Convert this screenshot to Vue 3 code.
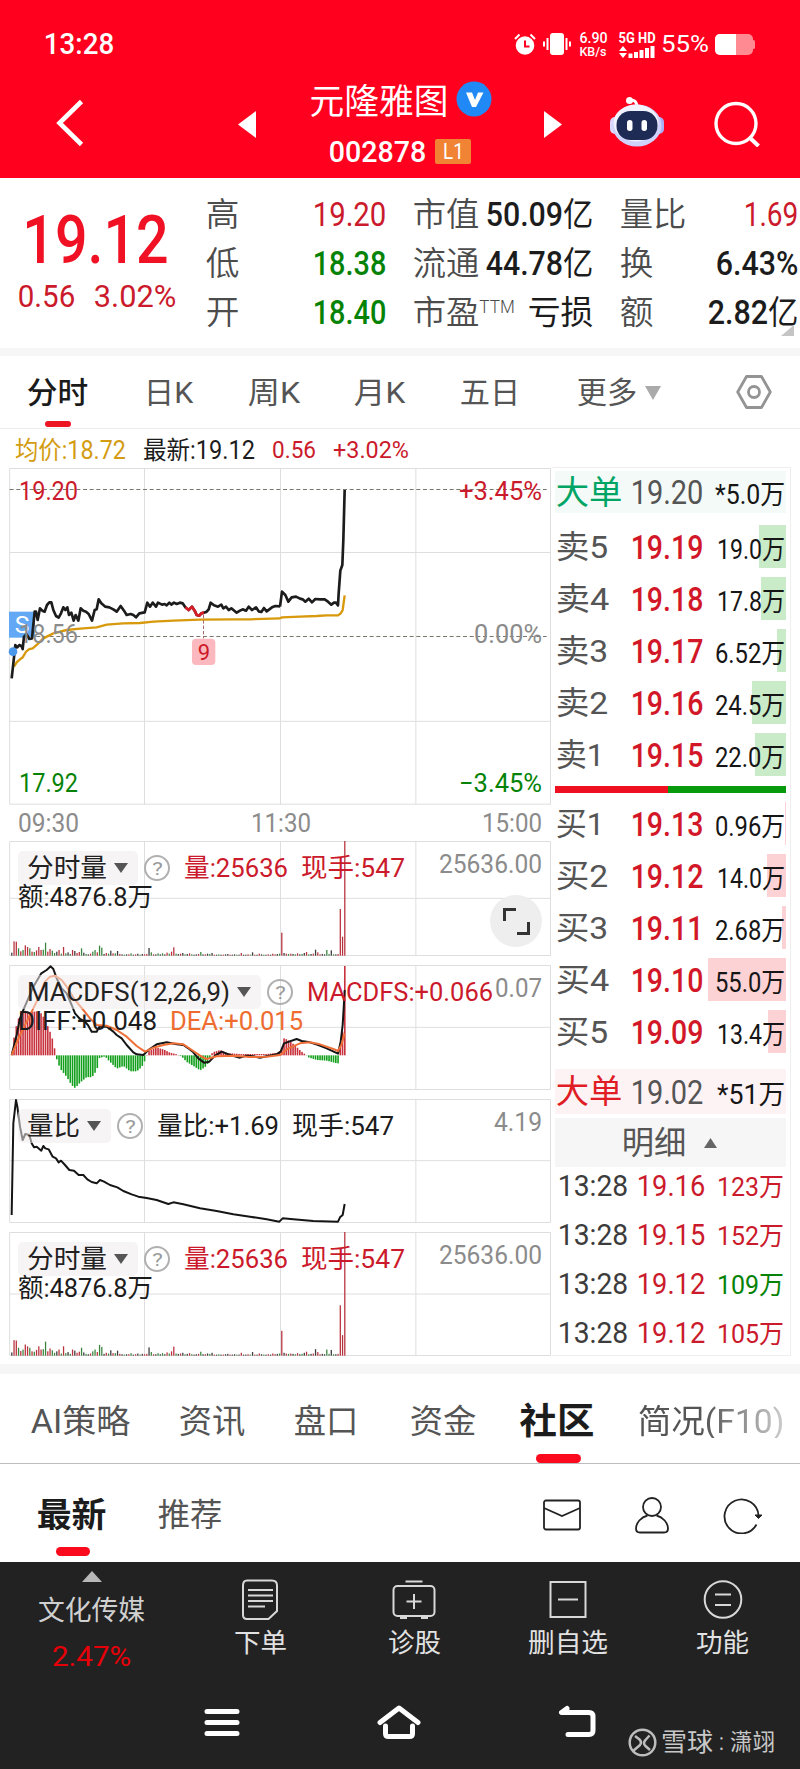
<script setup>
import { h } from 'vue'

// One line of text squeezed to a given width, vertically centred in its box.
// `cjk` sets a separate weight for the Chinese characters of a mixed line.
const Fit = (props) =>
  h(
    'svg',
    { class: 'fit', width: props.w, height: props.size, style: { overflow: 'visible', flex: 'none', display: 'block' } },
    [
      h(
        'text',
        {
          x: -props.size * 0.04,
          y: props.size * 0.84,
          'font-size': props.size,
          fill: 'currentColor',
          textLength: props.w + props.size * 0.08,
          lengthAdjust: 'spacingAndGlyphs'
        },
        props.cjk
          ? props.t
              .split(/([\u4e00-\u9fff]+)/)
              .filter(Boolean)
              .map((run) => h('tspan', /[\u4e00-\u9fff]/.test(run) ? { 'font-weight': props.cjk } : {}, run))
          : props.t
      )
    ]
  )
Fit.props = { t: String, w: Number, size: Number, cjk: Number }

const stats = [
  [
    { label: '高', lw: 31, value: '19.20', w: 71, tone: 'red' },
    { label: '市值', lw: 64, value: '50.09亿', w: 105, tone: 'ink' },
    { label: '量比', lw: 64, value: '1.69', w: 52, tone: 'red' }
  ],
  [
    { label: '低', lw: 31, value: '18.38', w: 71, tone: 'green' },
    { label: '流通', lw: 64, value: '44.78亿', w: 105, tone: 'ink' },
    { label: '换', lw: 31, value: '6.43%', w: 80, tone: 'ink' }
  ],
  [
    { label: '开', lw: 31, value: '18.40', w: 71, tone: 'green' },
    { label: '市盈', lw: 64, sup: 'TTM', value: '亏损', w: 63, tone: 'ink' },
    { label: '额', lw: 31, value: '2.82亿', w: 88, tone: 'ink' }
  ]
]

const periods = [
  { t: '分时', w: 59, active: true },
  { t: '日K', w: 47 },
  { t: '周K', w: 50 },
  { t: '月K', w: 49 },
  { t: '五日', w: 58 },
  { t: '更多', w: 58, more: true }
]

const sells = [
  { label: '卖5', lw: 50, price: '19.19', vol: '19.0万', w: 66, bar: 27 },
  { label: '卖4', lw: 51, price: '19.18', vol: '17.8万', w: 66, bar: 25 },
  { label: '卖3', lw: 50, price: '19.17', vol: '6.52万', w: 68, bar: 9 },
  { label: '卖2', lw: 50, price: '19.16', vol: '24.5万', w: 68, bar: 34 },
  { label: '卖1', lw: 46, price: '19.15', vol: '22.0万', w: 68, bar: 31 }
]

const buys = [
  { label: '买1', lw: 46, price: '19.13', vol: '0.96万', w: 68, bar: 1 },
  { label: '买2', lw: 50, price: '19.12', vol: '14.0万', w: 66, bar: 19 },
  { label: '买3', lw: 50, price: '19.11', vol: '2.68万', w: 68, bar: 4 },
  { label: '买4', lw: 51, price: '19.10', vol: '55.0万', w: 68, bar: 78 },
  { label: '买5', lw: 50, price: '19.09', vol: '13.4万', w: 66, bar: 18 }
]

const trades = [
  { price: '19.16', vol: '123万', tone: 'red' },
  { price: '19.15', vol: '152万', tone: 'red' },
  { price: '19.12', vol: '109万', tone: 'green' },
  { price: '19.12', vol: '105万', tone: 'red' }
]

const sections = [
  { t: 'AI策略', w: 97, size: 33 },
  { t: '资讯', w: 64, size: 33 },
  { t: '盘口', w: 62, size: 33 },
  { t: '资金', w: 64, size: 33 },
  { t: '社区', w: 72, size: 36, active: true },
  { t: '简况(F10)', w: 144, size: 33, fade: true }
]

// Minute bars: 149 slots from the open, 6.75 units apart
const STEP = 6.75
const volumeHeights = [
  9, 43, 42, 22, 13, 17, 31, 26, 22, 12, 11, 16, 26, 17, 18, 39, 12, 20, 15, 8, 12, 17, 6, 26, 7, 10, 5, 17, 14, 8,
  11, 22, 9, 5, 4, 6, 12, 17, 10, 30, 24, 5, 8, 6, 15, 7, 7, 14, 5, 4, 3, 4, 4, 7, 3, 4, 6, 3, 5, 4,
  5, 23, 10, 4, 4, 7, 4, 7, 4, 9, 6, 12, 25, 6, 5, 6, 8, 4, 5, 7, 4, 3, 4, 5, 11, 4, 4, 6, 5, 8,
  3, 3, 4, 3, 3, 4, 5, 3, 3, 4, 3, 3, 8, 3, 3, 4, 3, 10, 3, 3, 6, 4, 3, 3, 4, 3, 6, 4, 5, 6,
  69, 8, 6, 5, 6, 5, 4, 7, 4, 5, 8, 11, 4, 5, 6, 18, 10, 4, 5, 4, 17, 5, 16, 4, 4, 5, 140, 57, 345
]
const volumeTones =
  'krrgrgrrgrgrrrggrrggkrgrgkgrkrrgkgkrggrggkrgkrgkrkgkrgkrkgkrrkgrkgkgkrgrrgkrkgkrgkkrgkrkgkrkgkrkkrkkgkrkkrgkrkrkgkrkrrkgkkrgrkgrkgkrgkrkrrkkggkgkrrr'
const toneColors = { r: '#b8303c', g: '#38843c', k: '#3a3a3a' }
const volumeBars = volumeHeights.map((height, i) => ({
  x: 33.5 + i * STEP,
  height,
  fill: toneColors[i > 145 || height > 50 ? 'r' : volumeTones[i] || 'k']
}))

const histogramAnchors = [
  [35, 8], [42, 55], [50, 95], [60, 125], [70, 135], [90, 130], [110, 132], [125, 125], [140, 95], [150, 70],
  [160, 40], [166, 5], [170, -12], [180, -40], [200, -65], [215, -90], [225, -98], [240, -82], [260, -65],
  [275, -66], [290, -45], [298, -8], [315, -3], [322, -12], [335, -25], [350, -40], [370, -32], [390, -48],
  [410, -48], [425, -35], [438, -8], [442, 10], [455, 18], [470, 23], [490, 18], [510, 8], [530, 3], [545, -4],
  [560, -20], [580, -32], [600, -45], [615, -35], [625, -22], [632, 3], [640, 10], [660, 16], [680, 7],
  [720, 4], [800, 4], [835, 8], [845, 20], [852, 52], [865, 45], [885, 30], [900, 15], [915, 3], [925, -6],
  [950, -14], [980, -16], [1010, -24], [1016, -24], [1021, 40], [1028, 75], [1034, 268]
]
const histogramAt = (x) => {
  const i = histogramAnchors.findIndex((a) => a[0] >= x)
  if (i < 0) return 268
  if (i === 0) return histogramAnchors[0][1]
  const [x0, y0] = histogramAnchors[i - 1]
  const [x1, y1] = histogramAnchors[i]
  return y0 + ((y1 - y0) * (x - x0)) / (x1 - x0)
}
const histogramBars = Array.from({ length: 149 }, (_, i) => {
  const value = histogramAt(35 + i * STEP)
  return {
    x: 33 + i * STEP,
    y: value > 0 ? 661 - value : 661,
    height: Math.abs(value),
    fill: value > 0 ? '#c8323c' : '#12a01c'
  }
})

const panels = [
  {
    key: 'vol-top', kind: 'volume', viewBox: '0 18 1656 345', height: 115, mid: 190, base: 362, scale: 1,
    name: '分时量', nw: 78, max: '25636.00', mw: 101, tone: 'red',
    items: [{ t: '量:25636', w: 102 }, { t: '现手:547', w: 102 }],
    line2: [{ t: '额:4876.8万', w: 133, tone: 'ink' }]
  },
  {
    key: 'macd', kind: 'macd', viewBox: '0 390 1656 375', height: 125, mid: 577,
    name: 'MACDFS(12,26,9)', nw: 201, max: '0.07', mw: 45, tone: 'red',
    items: [{ t: 'MACDFS:+0.066', w: 184 }],
    line2: [{ t: 'DIFF:+0.048', w: 137, tone: 'ink' }, { t: 'DEA:+0.015', w: 131, tone: 'orange' }]
  },
  {
    key: 'ratio', kind: 'ratio', viewBox: '0 27 1656 372', height: 124, mid: 212,
    name: '量比', nw: 51, max: '4.19', mw: 46, tone: 'ink',
    items: [{ t: '量比:+1.69', w: 120 }, { t: '现手:547', w: 100 }],
    line2: []
  },
  {
    key: 'vol-bottom', kind: 'volume', viewBox: '0 426 1656 372', height: 124, mid: 612, base: 797, scale: 1.08,
    name: '分时量', nw: 78, max: '25636.00', mw: 101, tone: 'red',
    items: [{ t: '量:25636', w: 102 }, { t: '现手:547', w: 102 }],
    line2: [{ t: '额:4876.8万', w: 133, tone: 'ink' }]
  }
]

const topOf = (panel) => Number(panel.viewBox.split(' ')[1]) + 1.5
const bottomOf = (panel) => topOf(panel) + panel.height * 3 - 3
</script>

<template>
  <div class="app">
    <header class="top">
      <div class="status">
        <Fit class="status-time" t="13:28" :w="68" :size="29" />
        <div class="status-icons">
          <svg width="22" height="22" viewBox="0 0 22 22">
            <circle cx="11" cy="12.5" r="9.3" fill="#fff" />
            <path d="M1 6 5.5 1.5M21 6 16.500 1.500" stroke="#fff" stroke-width="2" />
            <path d="M11 7.500v6h4.500" fill="none" stroke="#ff001f" stroke-width="2" />
          </svg>
          <svg width="28" height="22" viewBox="0 0 28 22">
            <rect x="7" y="0" width="14" height="22" rx="3" fill="#fff" />
            <path d="M4.500 5v12M1 8.500v5M23.500 5v12M27 8.500v5" stroke="#fff" stroke-width="2" />
          </svg>
          <div class="stack speed">
            <Fit t="6.90" :w="27" :size="14" />
            <Fit t="KB/s" :w="26" :size="13" />
          </div>
          <div class="stack signal">
            <Fit t="5G HD" :w="36" :size="14" />
            <svg width="36" height="12" viewBox="0 0 36 12">
              <path d="M0 5 4 0l4 5zM0 7h8l-4 5z" fill="#fff" />
              <path d="M11.500 12V7.500M17 12V6M22.500 12V4M28 12V2M33.500 12V0" stroke="#fff" stroke-width="4" />
            </svg>
          </div>
          <Fit class="thin" t="55%" :w="46" :size="24" />
          <svg width="40" height="21" viewBox="0 0 40 21">
            <rect width="38" height="21" rx="5" fill="#ff8a92" />
            <rect x="37" y="6" width="3" height="9" rx="1.500" fill="#ff8a92" />
            <path d="M21 0H5a5 5 0 0 0-5 5v11a5 5 0 0 0 5 5h16z" fill="#fff" />
          </svg>
        </div>
      </div>
      <div class="titlebar">
        <svg class="back" width="28" height="48" viewBox="0 0 28 48">
          <path d="M25.500 2.500 3.500 24l22 21.500" fill="none" stroke="#fff" stroke-width="4.600" />
        </svg>
        <svg class="prev" width="18" height="27"><path d="M18 0v27L0 13.500z" fill="#fff" /></svg>
        <div class="title">
          <div class="title-line">
            <Fit t="元隆雅图" :w="136" :size="35" />
            <svg width="36" height="36" viewBox="0 0 36 36">
              <circle cx="18" cy="18" r="17.500" fill="#2189f5" />
              <path d="M10 11.500h6l3 7.500 3-7.500h5.500L20 26h-4z" fill="#fff" />
            </svg>
          </div>
          <div class="code-line">
            <Fit t="002878" :w="95" :size="30" />
            <span class="level"><Fit t="L1" :w="19" :size="22" /></span>
          </div>
        </div>
        <svg class="next" width="18" height="27"><path d="M0 0v27l18-13.500z" fill="#fff" /></svg>
        <svg class="robot" width="54" height="52" viewBox="0 0 54 52">
          <path d="M18 5q8-3 9 5" fill="none" stroke="#fff" stroke-width="3" />
          <circle cx="19.500" cy="4.500" r="3.500" fill="#fff" />
          <rect x="0" y="21" width="10" height="17" rx="5" fill="#dcd8fb" />
          <rect x="44" y="21" width="10" height="17" rx="5" fill="#aab0f4" />
          <ellipse cx="27" cy="29.500" rx="24.500" ry="21" fill="#cfd2fb" />
          <ellipse cx="26" cy="27" rx="22.500" ry="18.500" fill="#f3f3ff" />
          <rect x="6.500" y="15" width="41" height="29" rx="14" fill="#1d2b55" />
          <rect x="17" y="24" width="5.500" height="11" rx="2.700" fill="#fff" />
          <rect x="31.500" y="24" width="5.500" height="11" rx="2.700" fill="#fff" />
        </svg>
        <svg class="search" width="46" height="46" viewBox="0 0 46 46">
          <circle cx="22" cy="22.500" r="20" fill="none" stroke="#fff" stroke-width="3.400" />
          <path d="m35 36 9.500 9" stroke="#fff" stroke-width="4" />
        </svg>
      </div>
    </header>

    <section class="quote">
      <div class="last">
        <Fit class="last-price" t="19.12" :w="141" :size="67" />
        <div class="last-change">
          <Fit t="0.56" :w="55" :size="32" />
          <Fit t="3.02%" :w="80" :size="32" />
        </div>
      </div>
      <div class="stats">
        <template v-for="(row, r) in stats" :key="r">
          <div v-for="cell in row" :key="cell.label" class="stat">
            <Fit class="stat-label" :t="cell.label" :w="cell.lw" :size="33" />
            <Fit v-if="cell.sup" class="stat-sup" :t="cell.sup" :w="34" :size="18" />
            <Fit :class="['stat-value', cell.tone]" :t="cell.value" :w="cell.w" :size="33.5" :cjk="400" />
          </div>
        </template>
      </div>
      <svg class="corner" width="13" height="11"><path d="M13 0v11H0z" fill="#c4c4c4" /></svg>
    </section>

    <nav class="periods">
      <div v-for="p in periods" :key="p.t" class="period" :class="{ active: p.active }">
        <Fit :t="p.t" :w="p.w" :size="30" />
        <svg v-if="p.more" width="16" height="14"><path d="M0 0h16L8 14z" fill="#aaa" /></svg>
      </div>
      <svg class="hexagon" width="36" height="34" viewBox="0 0 36 34">
        <path d="M10.500 1.500h15L34.300 17l-8.800 15.500h-15L1.700 17z" fill="none" stroke="#949494" stroke-width="2.800" stroke-linejoin="round" />
        <circle cx="18" cy="17" r="5.500" fill="none" stroke="#949494" stroke-width="2.800" />
      </svg>
    </nav>

    <div class="legend">
      <Fit class="gold" t="均价:18.72" :w="109" :size="25" :cjk="400" />
      <Fit class="ink" t="最新:19.12" :w="110" :size="25" :cjk="400" />
      <Fit class="red" t="0.56" :w="42" :size="24" />
      <Fit class="red" t="+3.02%" :w="74" :size="24" />
    </div>

    <main class="market">
      <div class="charts">
        <div class="price-chart">
          <svg width="552" height="338" viewBox="0 0 1656 1014">
            <path d="M29 4.500H1652M29 256.500H1652M29 763H1652M29 1011.500H1652M29 4V1012M433.500 4V1012M841.500 4V1012M1247.500 4V1012M1651.500 4V1012" class="gridline" />
            <path d="M29 67.500H1640M29 508.500H1640" class="dashes" />
            <rect x="27" y="434" width="78" height="78" fill="#62a8f5" />
            <g transform="translate(0 309)">
              <polyline class="avg" points="42,290 50,277 60,268 68,262 78,245 88,237 98,235 110,225 130,205 160,190 200,180 240,176 290,172 320,164 370,160 420,159 460,155 520,152 600,149 700,148 750,148 840,145" />
              <polyline class="price" points="35,325 40,280 46,225 52,232 58,225 64,228 68,237 72,200 80,193 88,207 96,205 100,165 104,125 108,125 113,150 120,115 127,122 134,125 141,105 148,97 154,97 160,120 168,138 176,143 183,130 190,112 196,120 202,112 207,135 214,128 221,152 227,135 235,152 242,115 250,122 258,125 266,132 276,152 284,120 290,118 296,88 304,100 316,110 328,112 340,118 350,125 362,108 372,122 380,135 392,132 400,135 408,142 418,130 434,127 442,98 450,110 458,98 468,110 474,98 486,104 494,102 500,106 508,98 514,104 522,98 530,102 540,98 548,100 556,112 566,120 576,110 584,122 590,135 598,137 604,130 612,128 620,125 626,118 632,98 642,106 654,110 664,104 670,115 678,110 686,120 694,115 710,128 720,122 728,118 738,122 746,110 756,120 768,112 776,124 784,126 792,114 800,124 808,118 816,112 826,108 840,109" />
              <polyline class="price hot" points="556,112 566,120 576,110 584,122 590,135 598,137 604,130 612,128" />
              <path d="M610.500 135V205" stroke="#a66" stroke-width="3" stroke-dasharray="10 6" />
              <rect x="576" y="206" width="70" height="79" rx="12" fill="#fbb9bf" />
              <circle cx="39" cy="245" r="13" fill="#4a98ec" />
            </g>
            <g transform="translate(600 -51)">
              <polyline class="avg" points="240,505 246,502 300,500 350,498 380,496 414,496 422,490 428,480 434,436" />
              <polyline class="price" points="240,470 246,425 256,435 265,455 275,442 288,440 300,446 308,448 316,455 326,446 336,457 346,447 360,448 374,448 384,455 394,464 402,458 408,458 414,466 416,430 421,362 427,345 430,270 434,120" />
            </g>
            <text x="66" y="497" class="sell-mark" text-anchor="middle">S</text>
            <text x="612" y="579" class="nine" text-anchor="middle">9</text>
          </svg>
          <div class="axis left">
            <Fit class="red" t="19.20" :w="57" :size="26" />
            <Fit class="muted" t="18.56" :w="57" :size="26" />
            <Fit class="green" t="17.92" :w="57" :size="26" />
          </div>
          <div class="axis right">
            <Fit class="red" t="+3.45%" :w="81" :size="26" />
            <Fit class="muted" t="0.00%" :w="66" :size="26" />
            <Fit class="green" t="−3.45%" :w="81" :size="26" />
          </div>
        </div>
        <div class="times">
          <Fit t="09:30" :w="59" :size="26" />
          <Fit t="11:30" :w="58" :size="26" />
          <Fit t="15:00" :w="58" :size="26" />
        </div>

        <div v-for="panel in panels" :key="panel.key" class="panel" :class="panel.key">
          <svg width="552" :height="panel.height" :viewBox="panel.viewBox">
            <path
              class="gridline"
              :d="`M29 ${topOf(panel)}H1652M29 ${panel.mid}H1652M29 ${bottomOf(panel)}H1652M29 ${topOf(panel)}V${bottomOf(panel)}M433.5 ${topOf(panel)}V${bottomOf(panel)}M841.5 ${topOf(panel)}V${bottomOf(panel)}M1247.5 ${topOf(panel)}V${bottomOf(panel)}M1651.5 ${topOf(panel)}V${bottomOf(panel)}`"
            />
            <template v-if="panel.kind === 'volume'">
              <rect
                v-for="bar in volumeBars"
                :key="bar.x"
                :x="bar.x"
                :y="panel.base - bar.height * panel.scale"
                width="3.8"
                :height="bar.height * panel.scale"
                :fill="bar.fill"
              />
            </template>
            <template v-if="panel.kind === 'macd'">
              <rect v-for="bar in histogramBars" :key="bar.x" :x="bar.x" :y="bar.y" width="4.8" :height="bar.height" :fill="bar.fill" />
              <polyline class="diff" points="35,660 50,600 60,550 72,520 85,490 100,455 124,415 140,405 152,394 160,402 170,430 185,460 200,475 215,510 225,535 240,552 255,560 265,572 275,590 290,590 298,575 320,575 340,590 350,600 365,610 380,630 400,652 410,658 430,660 445,645 470,628 500,622 530,628 550,630 565,640 580,652 595,670 612,683 628,680 645,662 665,650 690,660 720,668 740,662 760,664 780,668 800,664 830,658 842,650 852,625 890,612 905,618 930,622 955,630 980,640 1014,656 1022,620 1028,570 1031,520 1034,465" />
              <polyline class="dea" points="35,660 60,600 85,550 110,500 135,440 150,425 165,422 185,435 200,455 225,495 250,525 270,550 290,570 320,572 350,585 380,605 410,633 435,650 460,638 490,630 520,625 550,628 580,648 605,665 620,672 650,664 700,662 750,666 800,665 840,660 865,640 900,625 930,622 960,628 1000,642 1014,648 1024,630 1034,595" />
            </template>
            <polyline
              v-if="panel.kind === 'ratio'"
              class="diff"
              points="35,375 40,100 48,30 52,50 60,110 68,150 76,132 88,135 95,160 102,172 110,170 124,182 130,168 136,175 146,178 158,200 168,205 176,217 183,212 195,225 208,240 222,242 236,255 250,255 262,268 275,276 290,280 300,270 312,275 330,285 352,292 370,303 395,313 415,320 440,324 470,330 505,342 520,337 550,343 600,355 650,363 700,373 750,380 800,388 838,395 848,385 880,388 940,393 1014,395 1020,382 1028,375 1034,342"
            />
          </svg>
          <div class="panel-head">
            <div class="panel-row">
              <div class="pill">
                <Fit :t="panel.name" :w="panel.nw" :size="26" />
                <svg width="14" height="10"><path d="M0 0h14L7 10z" fill="#555" /></svg>
              </div>
              <span class="help"><Fit t="?" :w="9" :size="19" /></span>
              <Fit v-for="item in panel.items" :key="item.t" :class="panel.tone" :t="item.t" :w="item.w" :size="26" :cjk="400" />
            </div>
            <div class="panel-row second">
              <Fit v-for="item in panel.line2" :key="item.t" :class="item.tone" :t="item.t" :w="item.w" :size="26" :cjk="400" />
            </div>
          </div>
          <Fit class="panel-max muted" :t="panel.max" :w="panel.mw" :size="26" />
          <div v-if="panel.key === 'vol-top'" class="expand">
            <svg width="27" height="27" viewBox="0 0 27 27">
              <path d="M1.500 13V1.500H13M25.500 14v11.500H14" fill="none" stroke="#333" stroke-width="3" />
            </svg>
          </div>
        </div>
      </div>

      <aside class="book">
        <div class="big sell">
          <Fit class="big-label" t="大单" :w="64" :size="33" />
          <Fit class="gray" t="19.20" :w="70" :size="34" />
          <Fit class="vol" t="*5.0万" :w="68" :size="27" :cjk="400" />
        </div>
        <div class="levels asks">
          <div v-for="row in sells" :key="row.label" class="level-row">
            <i class="depth" :style="{ width: row.bar + 'px' }"></i>
            <span class="level-label"><Fit :t="row.label" :w="row.lw" :size="32" /></span>
            <Fit class="price-num" :t="row.price" :w="70" :size="34" />
            <Fit class="vol" :t="row.vol" :w="row.w" :size="27" :cjk="400" />
          </div>
        </div>
        <div class="balance"><i></i></div>
        <div class="levels bids">
          <div v-for="row in buys" :key="row.label" class="level-row">
            <i class="depth" :style="{ width: row.bar + 'px' }"></i>
            <span class="level-label"><Fit :t="row.label" :w="row.lw" :size="32" /></span>
            <Fit class="price-num" :t="row.price" :w="70" :size="34" />
            <Fit class="vol" :t="row.vol" :w="row.w" :size="27" :cjk="400" />
          </div>
        </div>
        <div class="big buy">
          <Fit class="big-label" t="大单" :w="64" :size="33" />
          <Fit class="gray" t="19.02" :w="70" :size="34" />
          <Fit class="vol" t="*51万" :w="66" :size="27" :cjk="400" />
        </div>
        <div class="detail-head">
          <Fit t="明细" :w="62" :size="32" />
          <svg width="13" height="10"><path d="M0 10h13L6.500 0z" fill="#666" /></svg>
        </div>
        <div v-for="(trade, i) in trades" :key="i" class="trade">
          <Fit class="trade-time" t="13:28" :w="68" :size="30" />
          <Fit class="red" :t="trade.price" :w="66" :size="30" />
          <Fit :class="['trade-vol', trade.tone]" :t="trade.vol" :w="65" :size="26" :cjk="400" />
        </div>
      </aside>
    </main>

    <nav class="sections">
      <div v-for="s in sections" :key="s.t" class="section" :class="{ active: s.active, fade: s.fade }">
        <Fit :t="s.t" :w="s.w" :size="s.size" />
      </div>
    </nav>

    <div class="feed">
      <div class="feed-tab active"><Fit t="最新" :w="67" :size="34" /></div>
      <div class="feed-tab"><Fit t="推荐" :w="62" :size="32" /></div>
      <div class="feed-icons">
        <svg width="38" height="32" viewBox="0 0 38 32">
          <rect x="1" y="1.500" width="36" height="29" rx="2" />
          <path d="m1 9 18 8 18-8" />
        </svg>
        <svg width="34" height="37" viewBox="0 0 34 37">
          <circle cx="17" cy="10" r="9" />
          <path d="M12.500 18.500C6 20 1 26 1 31.500Q1 35.500 5 35.500H29Q33 35.500 33 31.500C33 26 28 20 21.500 18.500" />
        </svg>
        <svg width="40" height="37" viewBox="0 0 40 37">
          <path d="M33.500 27.500A17 17 0 1 1 35.500 18.500" />
          <path d="M32 18h7l-3.500 3.500z" fill="#222" stroke-width="1" />
        </svg>
      </div>
    </div>

    <footer class="bottom">
      <div class="actions">
        <div class="sector">
          <svg width="20" height="11"><path d="M0 11h20L10 0z" fill="#b8b8b8" /></svg>
          <Fit class="sector-name" t="文化传媒" :w="105" :size="27" />
          <Fit class="sector-change" t="2.47%" :w="77" :size="28" />
        </div>
        <div class="action">
          <svg width="38" height="42" viewBox="0 0 38 42">
            <path d="M6 1.500H31Q36 1.500 36 6.500V32L27.500 40H6Q2 40 2 36V6.500Q2 1.500 6 1.500Z" />
            <path d="M7 11h25M7 16.500h25M7 22h25M7 27.500h17" />
          </svg>
          <Fit t="下单" :w="51" :size="26" />
        </div>
        <div class="action">
          <svg width="44" height="42" viewBox="0 0 44 42">
            <rect x="1.500" y="7" width="41" height="30" rx="4" />
            <path d="M13.500 2.500h17M22 15v15M14.500 22.500h15M8 39h7M29 39h7" />
          </svg>
          <Fit t="诊股" :w="51" :size="26" />
        </div>
        <div class="action">
          <svg width="38" height="42" viewBox="0 0 38 42">
            <rect x="1.500" y="3" width="35" height="35" />
            <path d="M9 20.500h20" />
          </svg>
          <Fit t="删自选" :w="78" :size="26" />
        </div>
        <div class="action">
          <svg width="40" height="42" viewBox="0 0 40 42">
            <circle cx="20" cy="20.500" r="18.300" />
            <path d="M12 15.500h16M12 26h16" />
          </svg>
          <Fit t="功能" :w="51" :size="26" />
        </div>
      </div>
      <div class="system">
        <svg width="36" height="34" viewBox="0 0 36 34"><path d="M3 6.500h30M3 17.500h30M3 28.500h30" /></svg>
        <svg width="44" height="36" viewBox="0 0 44 36">
          <path d="M3 18.500 22 4l19 14.500M8.500 22v7.500q0 3 3 3h21q3 0 3-3V22" />
        </svg>
        <svg width="38" height="34" viewBox="0 0 38 34">
          <path d="M9 3.500 3.500 7.500H31q4 0 4 4v14q0 4-4 4H10" />
        </svg>
      </div>
      <div class="watermark">
        <svg width="29" height="29" viewBox="0 0 29 29">
          <circle cx="14.500" cy="14.500" r="12.800" />
          <path d="M7 8l4.500 3.500q3 3 0 6L5 23M21.500 7.500 17.500 12q-3 3 0 6l4.500 4" />
        </svg>
        <Fit t="雪球" :w="50" :size="25" />
        <Fit t=":" :w="3" :size="23" />
        <Fit t="潇翊" :w="43" :size="23" />
      </div>
    </footer>
  </div>
</template>

<style>
body {
  background: #fff;
}
</style>

<style scoped>
.app {
  width: 800px;
  height: 1769px;
  overflow: hidden;
  background: #fff;
  font-family: Roboto, 'Noto Sans CJK SC', sans-serif;
  color: #222;
}

.app svg {
  display: block;
  flex: none;
}

.red { color: #cb1a2b; }
.green { color: #068306; }
.ink { color: #1c1c1c; }
.gray { color: #555; }
.muted { color: #8b8b8b; }
.gold { color: #d39c12; }
.orange { color: #ee6c30; }

/* Header */
.top {
  height: 178px;
  background: #ff001f;
  color: #fff;
}

.status {
  height: 88px;
  display: flex;
  align-items: center;
  justify-content: space-between;
  padding: 0 45px;
  box-sizing: border-box;
}

.status-time { font-weight: 500; }

.status-icons {
  display: flex;
  align-items: center;
  gap: 7px;
}

.stack {
  display: flex;
  flex-direction: column;
  font-weight: 500;
}

.speed { margin-left: 2px; }

.signal {
  gap: 1px;
  margin-left: 5px;
  font-weight: 700;
}

.titlebar {
  display: flex;
  align-items: flex-start;
  height: 90px;
}

.back { margin: 11px 0 0 56px; }
.prev { margin: 23px 0 0 154px; }

.title {
  width: 180px;
  margin-left: 55px;
}

.title-line {
  display: flex;
  align-items: center;
  gap: 9px;
  height: 36px;
  margin-top: -4px;
}

.title-line svg:last-child {
  margin-top: -6px;
}

.code-line {
  display: flex;
  align-items: center;
  gap: 10px;
  height: 25px;
  margin: 19px 0 0 19px;
  font-weight: 500;
}

.level {
  display: flex;
  align-items: center;
  justify-content: center;
  width: 36px;
  height: 25px;
  border-radius: 2px;
  background: #f08434;
  font-weight: 400;
}

.next { margin: 23px 0 0 53px; }
.robot { margin: 8px 0 0 48px; }
.search { margin: 13px 0 0 50px; }

/* Quote */
.quote {
  position: relative;
  display: flex;
  height: 170px;
  border-bottom: 8px solid #f6f6f6;
}

.last {
  width: 207px;
  color: #cb1a2b;
}

.last-price {
  margin: 29px 0 0 25px;
  color: #f01224;
  font-weight: 500;
}

.last-change {
  display: flex;
  gap: 21px;
  margin: 6px 0 0 19px;
}

.stats {
  display: grid;
  grid-template-columns: 178px 178px 176px;
  grid-auto-rows: 49px;
  column-gap: 29px;
  padding-top: 12px;
}

.stat {
  display: flex;
  align-items: center;
}

.stat-label,
.stat-sup { color: #4c4c4c; font-weight: 350; }

.stat-sup {
  margin: -12px 0 0 2px;
}

.stat-value { margin-left: auto; }
.stat-value.green,
.stat-value.ink { font-weight: 500; }

.corner {
  position: absolute;
  right: 6px;
  bottom: 12px;
}

/* Period tabs */
.periods {
  display: flex;
  align-items: center;
  height: 72px;
  border-bottom: 1px solid #ececec;
  color: #555;
}

.period {
  position: relative;
  display: flex;
  align-items: center;
  gap: 9px;
  margin: 2px 0 0 59px;
}

.period:nth-child(1) { margin-left: 28px; }
.period:nth-child(2) { margin-left: 58px; }
.period:nth-child(3) { margin-left: 57px; }
.period:nth-child(4) { margin-left: 56px; }
.period:nth-child(5) { margin-left: 57px; }

.period.active {
  color: #1a1a1a;
  font-weight: 500;
}

.period.active::after {
  content: '';
  position: absolute;
  left: 17px;
  bottom: -19px;
  width: 26px;
  height: 6px;
  border-radius: 3px;
  background: #ee1522;
}

.hexagon { margin-left: 75px; }

.legend {
  display: flex;
  align-items: center;
  gap: 19px;
  height: 38px;
  padding-top: 4px;
  padding-left: 16px;
  box-sizing: border-box;
}

/* Charts */
.market {
  display: flex;
  height: 897px;
  border-bottom: 10px solid #f6f6f6;
}

.charts { width: 552px; }

.gridline {
  fill: none;
  stroke: #dedede;
  stroke-width: 3;
}

.dashes {
  fill: none;
  stroke: #77776c;
  stroke-width: 3;
  stroke-dasharray: 12 8;
}

.avg {
  fill: none;
  stroke: #d8990c;
  stroke-width: 7;
}

.price {
  fill: none;
  stroke: #1c1c1c;
  stroke-width: 8;
  stroke-linejoin: round;
}

.price.hot { stroke: #d81c28; }

.sell-mark {
  fill: #fff;
  font-size: 74px;
}

.nine {
  fill: #cc1a28;
  font-size: 66px;
}

.price-chart {
  position: relative;
  height: 338px;
}

.axis {
  position: absolute;
  top: 11px;
  bottom: 9px;
  display: flex;
  flex-direction: column;
  justify-content: space-between;
}

.axis.left { left: 20px; }

.axis.right {
  right: 11px;
  align-items: flex-end;
}

.axis .muted { margin-top: -6px; }

.times {
  display: flex;
  align-items: center;
  justify-content: space-between;
  height: 36px;
  padding: 0 11px 0 19px;
  color: #8b8b8b;
}

.panel {
  position: relative;
  margin-bottom: 9px;
}

.diff,
.dea {
  fill: none;
  stroke: #151515;
  stroke-width: 6;
  stroke-linejoin: round;
}

.dea { stroke: #ee7038; }

.panel-head {
  position: absolute;
  top: 10px;
  left: 18px;
}

.panel-row {
  display: flex;
  align-items: center;
  gap: 15px;
  height: 34px;
}

.panel-row.second {
  height: 26px;
  margin: -1px 0 0 1px;
}

.pill {
  display: flex;
  align-items: center;
  gap: 8px;
  height: 34px;
  padding: 0 10px;
  border-radius: 5px;
  background: rgba(240, 235, 237, 0.55);
}

.help {
  display: flex;
  align-items: center;
  justify-content: center;
  width: 26px;
  height: 26px;
  box-sizing: border-box;
  margin-left: -9px;
  border: 2px solid #b0b0b0;
  border-radius: 50%;
  color: #999;
}

.panel-max {
  position: absolute;
  top: 10px;
  right: 11px;
}

.expand {
  position: absolute;
  top: 54px;
  right: 10px;
  display: flex;
  align-items: center;
  justify-content: center;
  width: 52px;
  height: 52px;
  border-radius: 50%;
  background: #eeeeee;
}

/* Order book */
.book {
  width: 239px;
  height: 889px;
  box-sizing: border-box;
  padding: 3px 4px 0 3px;
  border: 1px solid #eee;
  border-left: 0;
}

.big {
  display: flex;
  align-items: center;
  height: 42px;
  padding-left: 2px;
}

.big .gray { margin-left: 11px; }
.big.sell { background: #f4faf7; }
.big.sell .big-label { color: #00a566; }
.big.buy { height: 45px; margin-top: 16px; background: #fdf3f5; }
.big.buy .big-label { color: #e01c24; }

.vol {
  position: relative;
  margin: 5px 2px 0 auto;
  color: #161616;
}

.levels {
  display: grid;
  grid-auto-rows: 43px;
  row-gap: 9px;
}

.asks { margin-top: 12px; }
.bids { margin-top: 9px; }

.level-row {
  position: relative;
  display: flex;
  align-items: center;
  padding-left: 2px;
}

.depth {
  position: absolute;
  top: 0;
  right: 0;
  bottom: 0;
}

.asks .depth { background: #c9ebc8; }
.bids .depth { background: #fdd2d5; }

.level-label {
  width: 75px;
  color: #555;
}

.price-num {
  color: #d21828;
  font-weight: 500;
}

.balance {
  height: 7px;
  margin-top: 10px;
  background: #069a0c;
}

.balance i {
  display: block;
  width: 113px;
  height: 7px;
  background: #ee1020;
}

.detail-head {
  display: flex;
  align-items: center;
  gap: 19px;
  height: 49px;
  margin-top: 4px;
  padding-left: 68px;
  background: #f6f6f6;
  color: #555;
}

.trade {
  display: flex;
  align-items: center;
  height: 49px;
  padding: 0 3px 0 4px;
}

.detail-head + .trade { margin-top: -6px; }

.trade-time {
  margin-right: 11px;
  color: #3c3c3c;
}

.trade-vol { margin: 3px 0 0 auto; }

/* Section tabs */
.sections {
  display: flex;
  align-items: center;
  height: 89px;
  padding-left: 32px;
  border-bottom: 1px solid #bdbdbd;
  color: #555;
}

.section {
  position: relative;
  margin: 6px 51px 0 0;
}

.section:nth-child(3) { margin-right: 54px; }
.section:nth-child(4),
.section:nth-child(5) { margin-right: 46px; }

.section.active {
  color: #1c1c1c;
  font-weight: 700;
}

.section.active::after {
  content: '';
  position: absolute;
  left: 15px;
  bottom: -23px;
  width: 45px;
  height: 9px;
  border-radius: 5px;
  background: #fa0a1c;
}

.section.fade {
  -webkit-mask-image: linear-gradient(90deg, #000 45%, rgba(0, 0, 0, 0.3) 100%);
  mask-image: linear-gradient(90deg, #000 45%, rgba(0, 0, 0, 0.3) 100%);
}

/* Feed tabs */
.feed {
  display: flex;
  align-items: center;
  height: 98px;
  padding-left: 38px;
  color: #555;
}

.feed-tab {
  position: relative;
  margin: 3px 54px 0 0;
}

.feed-tab.active {
  color: #1c1c1c;
  font-weight: 700;
}

.feed-tab.active::after {
  content: '';
  position: absolute;
  left: 18px;
  bottom: -24px;
  width: 34px;
  height: 9px;
  border-radius: 5px;
  background: #fa0a1c;
}

.feed-icons {
  display: flex;
  align-items: center;
  gap: 54px;
  margin: 4px 37px 0 auto;
  fill: none;
  stroke: #222;
  stroke-width: 1.8;
}

/* Bottom bars */
.bottom {
  position: relative;
  height: 207px;
  background: #222;
  color: #e2e2e2;
}

.actions {
  display: grid;
  grid-template-columns: 183px 154px 154px 154px 155px;
  height: 118px;
}

.sector,
.action {
  display: flex;
  flex-direction: column;
  align-items: center;
}

.sector {
  padding-top: 9px;
}

.sector-name {
  margin-top: 15px;
  color: #d0d0d0;
}

.sector-change {
  margin-top: 18px;
  color: #e60008;
}

.action {
  gap: 9px;
  padding-top: 17px;
}

.action > svg:first-child {
  fill: none;
  stroke: #d8d8d8;
  stroke-width: 2;
}

.system {
  display: flex;
  align-items: center;
  justify-content: space-between;
  padding: 24px 204px 0 204px;
  fill: none;
  stroke: #fff;
  stroke-width: 5;
  stroke-linecap: round;
  stroke-linejoin: round;
}

.system .fit { stroke: none; }

.watermark {
  position: absolute;
  right: 26px;
  bottom: 12px;
  display: flex;
  align-items: center;
  gap: 8px;
  color: #c8c8c8;
}

.watermark > svg:first-child {
  margin-right: -3px;
  fill: none;
  stroke: #bdbdbd;
  stroke-width: 2.5;
}
</style>
